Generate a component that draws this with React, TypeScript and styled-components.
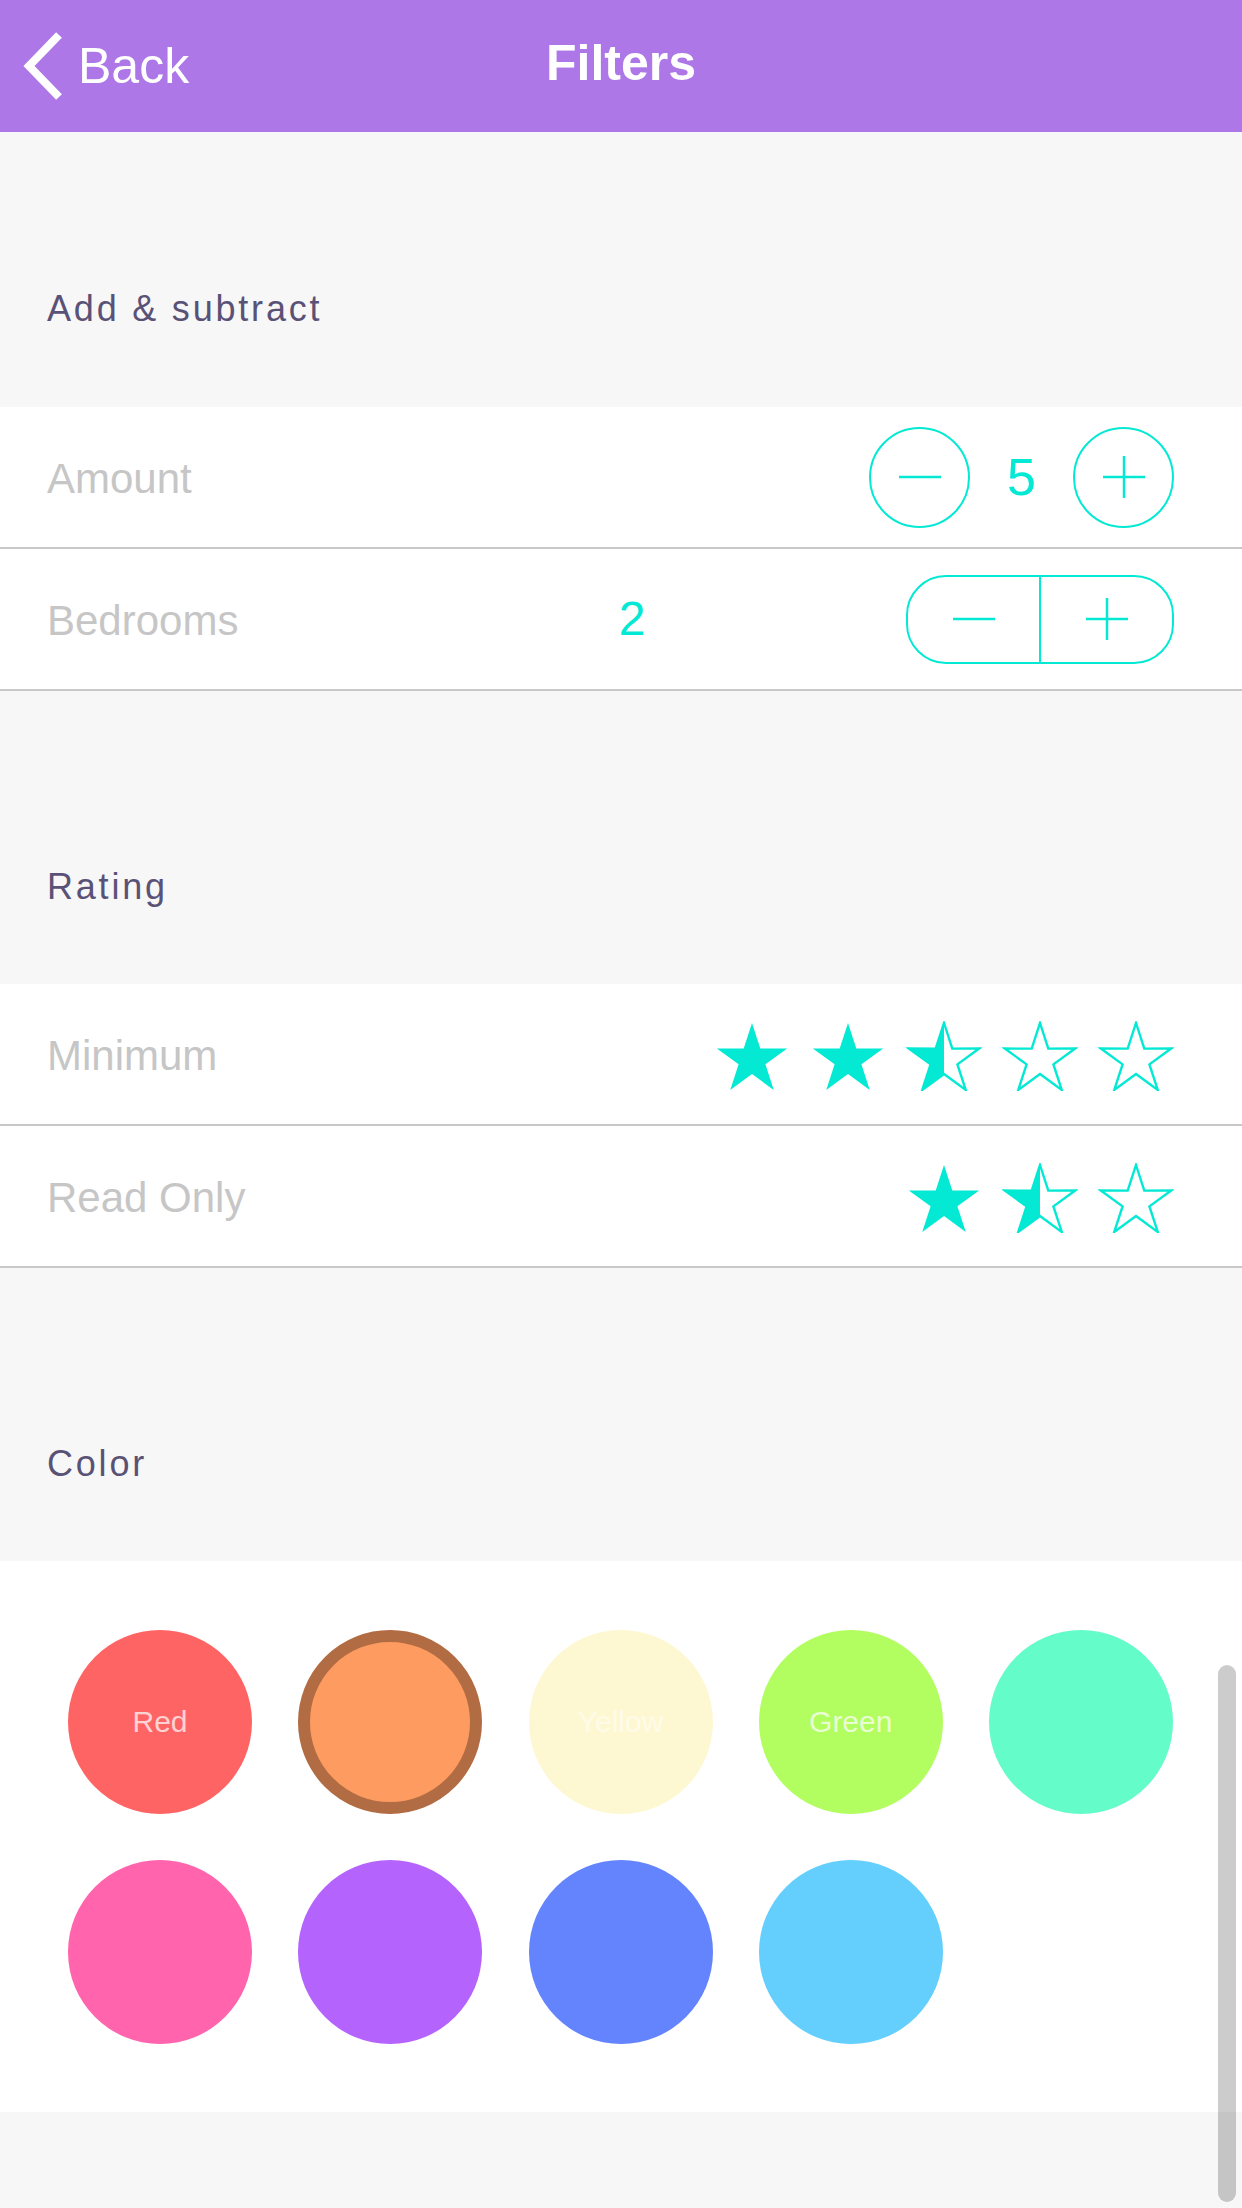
import React from "react";
import styled, { createGlobalStyle } from "styled-components";

const TEAL = "#03E9D3";
const LINE = "#C8C8C8";

const GlobalStyle = createGlobalStyle`
  html, body {
    margin: 0;
    padding: 0;
    background: #F7F7F7;
    font-family: "Liberation Sans", Arial, Helvetica, sans-serif;
  }
  * { box-sizing: border-box; }
`;

const Page = styled.div`
  position: relative;
  min-height: 100vh;
  background: #f7f7f7;
`;

const Header = styled.header`
  display: grid;
  grid-template-columns: 1fr auto 1fr;
  align-items: center;
  height: 132px;
  padding: 0 20px;
  background: #ad77e8;
  color: #ffffff;
`;

const BackButton = styled.div`
  display: flex;
  align-items: center;
  gap: 14px;
  font-size: 50px;
  line-height: 1;
  font-weight: 400;
  color: #ffffff;
`;

const Title = styled.h1`
  margin: 0;
  font-size: 50px;
  line-height: 1;
  font-weight: 700;
  color: #ffffff;
  margin-top: -6px;
`;

const SectionHeader = styled.div<{ $first?: boolean }>`
  display: flex;
  align-items: flex-end;
  height: ${(p) => (p.$first ? 275 : 293)}px;
  padding: 0 47px ${(p) => (p.$first ? 80 : 79)}px;
  font-size: 36px;
  line-height: 36px;
  letter-spacing: 2.8px;
  color: #5a5276;
`;

const Row = styled.div`
  display: flex;
  align-items: center;
  height: 142px;
  padding: 0 68px 0 47px;
  background: #ffffff;
  border-bottom: 2px solid ${LINE};
`;

const Label = styled.div`
  flex: 1;
  font-size: 42px;
  line-height: 1;
  color: #c6c6c6;
  margin-top: 3px;
`;

const Counter = styled.div`
  display: flex;
  align-items: center;
`;

const RoundButton = styled.div`
  width: 101px;
  height: 101px;
  border: 2.5px solid ${TEAL};
  border-radius: 50%;
  display: flex;
  align-items: center;
  justify-content: center;
`;

const Count = styled.div<{ $size: number }>`
  width: 103px;
  text-align: center;
  font-size: ${(p) => p.$size}px;
  line-height: 1;
  color: ${TEAL};
`;

const BedroomValue = styled(Count)`
  width: 50px;
  margin-right: 249px;
`;

const Pill = styled.div`
  display: flex;
  width: 268px;
  height: 89px;
  border: 2.5px solid ${TEAL};
  border-radius: 40px;
  overflow: hidden;
`;

const PillHalf = styled.div<{ $divider?: boolean }>`
  flex: 1;
  display: flex;
  align-items: center;
  justify-content: center;
  border-left: ${(p) => (p.$divider ? `2.5px solid ${TEAL}` : "none")};
`;

const Stars = styled.div`
  display: flex;
  gap: 20px;
  margin-top: 3px;
`;

const StarSvg = styled.svg`
  display: block;
  width: 76px;
  height: 70px;
`;

const ColorGrid = styled.div`
  display: grid;
  grid-template-columns: repeat(5, 184px);
  justify-content: space-between;
  row-gap: 46px;
  padding: 69px 69px 68px 68px;
  background: #ffffff;
`;

const Swatch = styled.div<{ $color: string; $selected?: boolean; $faint?: boolean }>`
  width: 184px;
  height: 184px;
  border-radius: 50%;
  background: ${(p) => p.$color};
  border: ${(p) => (p.$selected ? "12px solid #B26C43" : "none")};
  display: flex;
  align-items: center;
  justify-content: center;
  font-size: 30px;
  color: ${(p) => (p.$faint ? "rgba(255, 255, 255, 0.5)" : "rgba(255, 255, 255, 0.72)")};
`;

const Scrollbar = styled.div`
  position: absolute;
  top: 1665px;
  right: 6px;
  width: 18px;
  height: 537px;
  border-radius: 9px;
  background: rgba(0, 0, 0, 0.2);
`;

const STAR_POINTS =
  "38,2 46.29,27.59 73.19,27.57 51.41,43.36 59.75,68.93 38,53.1 16.25,68.93 24.59,43.36 2.81,27.57 29.71,27.59";

type StarKind = "full" | "half" | "empty";

function Star({ kind, id }: { kind: StarKind; id: string }) {
  return (
    <StarSvg viewBox="0 0 76 70">
      <defs>
        <clipPath id={id}>
          <rect x="0" y="0" width="38" height="70" />
        </clipPath>
      </defs>
      {kind === "full" && <polygon points={STAR_POINTS} fill={TEAL} />}
      {kind !== "full" && (
        <polygon
          points={STAR_POINTS}
          fill="none"
          stroke={TEAL}
          strokeWidth="2.4"
          strokeLinejoin="miter"
        />
      )}
      {kind === "half" && (
        <polygon points={STAR_POINTS} fill={TEAL} clipPath={`url(#${id})`} />
      )}
    </StarSvg>
  );
}

function MinusIcon() {
  return (
    <svg width="44" height="44" viewBox="0 0 44 44">
      <line x1="1" y1="22" x2="43" y2="22" stroke={TEAL} strokeWidth="2.5" />
    </svg>
  );
}

function PlusIcon() {
  return (
    <svg width="44" height="44" viewBox="0 0 44 44">
      <line x1="1" y1="22" x2="43" y2="22" stroke={TEAL} strokeWidth="2.5" />
      <line x1="22" y1="1" x2="22" y2="43" stroke={TEAL} strokeWidth="2.5" />
    </svg>
  );
}

function Chevron() {
  return (
    <svg width="44" height="70" viewBox="0 0 44 70">
      <polyline
        points="39,4 9,35 39,66"
        fill="none"
        stroke="#ffffff"
        strokeWidth="8"
        strokeLinecap="butt"
        strokeLinejoin="miter"
      />
    </svg>
  );
}

const swatches: { color: string; label?: string; selected?: boolean; faint?: boolean }[] = [
  { color: "#FF6464", label: "Red" },
  { color: "#FD9B61", selected: true },
  { color: "#FEF8D2", label: "Yellow", faint: true },
  { color: "#B2FD60", label: "Green" },
  { color: "#64FCC8" },
  { color: "#FF64AD" },
  { color: "#B464FD" },
  { color: "#6484FD" },
  { color: "#64CFFD" },
];

export default function App() {
  return (
    <Page>
      <GlobalStyle />
      <Header>
        <BackButton>
          <Chevron />
          <span>Back</span>
        </BackButton>
        <Title>Filters</Title>
        <div />
      </Header>

      <SectionHeader $first>Add &amp; subtract</SectionHeader>
      <Row>
        <Label>Amount</Label>
        <Counter>
          <RoundButton>
            <MinusIcon />
          </RoundButton>
          <Count $size={52}>5</Count>
          <RoundButton>
            <PlusIcon />
          </RoundButton>
        </Counter>
      </Row>
      <Row>
        <Label>Bedrooms</Label>
        <BedroomValue $size={48}>2</BedroomValue>
        <Pill>
          <PillHalf>
            <MinusIcon />
          </PillHalf>
          <PillHalf $divider>
            <PlusIcon />
          </PillHalf>
        </Pill>
      </Row>

      <SectionHeader>Rating</SectionHeader>
      <Row>
        <Label>Minimum</Label>
        <Stars>
          <Star kind="full" id="m1" />
          <Star kind="full" id="m2" />
          <Star kind="half" id="m3" />
          <Star kind="empty" id="m4" />
          <Star kind="empty" id="m5" />
        </Stars>
      </Row>
      <Row>
        <Label>Read Only</Label>
        <Stars>
          <Star kind="full" id="r1" />
          <Star kind="half" id="r2" />
          <Star kind="empty" id="r3" />
        </Stars>
      </Row>

      <SectionHeader>Color</SectionHeader>
      <ColorGrid>
        {swatches.map((s, i) => (
          <Swatch key={i} $color={s.color} $selected={s.selected} $faint={s.faint}>
            {s.label}
          </Swatch>
        ))}
      </ColorGrid>

      <Scrollbar />
    </Page>
  );
}
